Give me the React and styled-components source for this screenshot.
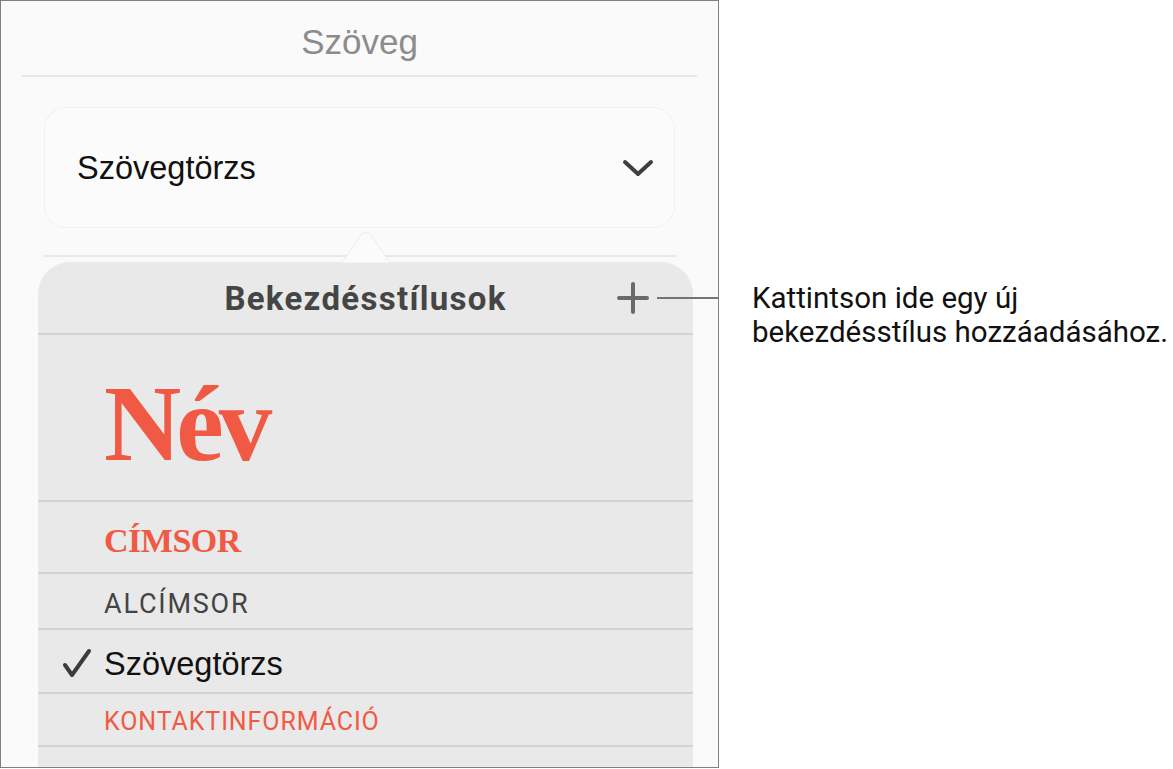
import React from 'react';
import styled, { createGlobalStyle } from 'styled-components';

const GlobalStyle = createGlobalStyle`
  html, body {
    margin: 0;
    padding: 0;
    background: #ffffff;
  }
  * {
    box-sizing: border-box;
  }
`;

const Page = styled.div`
  display: flex;
  align-items: flex-start;
  width: 1173px;
  height: 769px;
  overflow: hidden;
`;

const Panel = styled.div`
  display: flex;
  flex-direction: column;
  width: 719px;
  height: 768px;
  border: 1px solid #7f7f7f;
  background: #fafafa;
  overflow: hidden;
  flex-shrink: 0;

  & > * {
    flex-shrink: 0;
  }
`;

const Title = styled.div`
  height: 76px;
  margin: 0 21px;
  display: flex;
  align-items: center;
  justify-content: center;
  padding-top: 8px;
  border-bottom: 2px solid #e6e6e6;
  font-family: 'Liberation Sans', Arial, sans-serif;
  font-size: 35px;
  color: #8c8c8c;
`;

const Card = styled.div`
  display: flex;
  align-items: center;
  justify-content: space-between;
  margin: 30px 0 0 43px;
  width: 631px;
  height: 121px;
  padding: 0 20px 0 32px;
  border: 1px solid #f1f1f1;
  border-radius: 22px;
  background: #fbfbfb;
`;

const CardText = styled.span`
  font-family: 'Liberation Sans', Arial, sans-serif;
  font-size: 32.5px;
  color: #111;
  padding-top: 2px;
`;

const Rule = styled.div`
  margin: 27px 0 0 42px;
  width: 634px;
  height: 2px;
  background: #e8e8e8;
`;

const Popover = styled.div`
  position: relative;
  margin: 5px 0 0 37px;
  width: 655px;
  background: #e9e9e9;
  border-radius: 32px 32px 0 0;
`;

const Arrow = styled.svg`
  position: absolute;
  top: -30px;
  left: 304px;
  width: 48px;
  height: 31px;
`;

const Header = styled.div`
  position: relative;
  display: flex;
  align-items: center;
  justify-content: center;
  height: 73px;
  border-bottom: 2px solid #d3d3d3;
`;

const HeaderTitle = styled.span`
  font-family: Roboto, 'Liberation Sans', sans-serif;
  font-weight: 700;
  font-size: 33px;
  letter-spacing: 1.3px;
  color: #454545;
  padding-top: 2px;
`;

const PlusButton = styled.div`
  position: absolute;
  left: 579px;
  top: 20px;
  width: 32px;
  height: 32px;
  display: flex;
`;

const Leader = styled.div`
  position: absolute;
  left: 40px;
  top: 15px;
  width: 84px;
  height: 2px;
  background: #747474;
`;

const Row = styled.div`
  position: relative;
  display: flex;
  align-items: center;
  height: ${(p) => p.$h}px;
  padding-left: 66px;
  padding-top: ${(p) => p.$shift || 0}px;
  border-bottom: 2px solid #d3d3d3;
`;

const NameText = styled.span`
  font-family: 'Liberation Serif', 'Times New Roman', serif;
  font-weight: 700;
  font-size: 107px;
  letter-spacing: -5px;
  color: #f05a45;
  line-height: 1;
`;

const HeadingText = styled.span`
  font-family: 'Liberation Serif', 'Times New Roman', serif;
  font-weight: 700;
  font-size: 34px;
  letter-spacing: -0.5px;
  color: #f05a45;
`;

const CapsText = styled.span`
  font-family: Roboto, 'Liberation Sans', sans-serif;
  font-size: ${(p) => p.$size}px;
  letter-spacing: ${(p) => p.$spacing}px;
  color: ${(p) => p.$color};
`;

const BodyText = styled.span`
  font-family: 'Liberation Sans', Arial, sans-serif;
  font-size: 32.5px;
  color: #111;
`;

const Check = styled.svg`
  position: absolute;
  left: 24px;
  top: 18px;
  width: 30px;
  height: 30px;
`;

const Note = styled.div`
  margin: 281px 0 0 33px;
  font-family: Roboto, 'Liberation Sans', sans-serif;
  font-size: 29.5px;
  line-height: 34px;
  color: #111;
  white-space: nowrap;
`;

const Chevron = () => (
  <svg width="32" height="20" viewBox="0 0 32 20">
    <path d="M3 4 L16 16 L29 4" fill="none" stroke="#3f3f3f" strokeWidth="4" strokeLinecap="round" strokeLinejoin="round" />
  </svg>
);

export default function App() {
  return (
    <>
      <GlobalStyle />
      <Page>
        <Panel>
          <Title>Szöveg</Title>
          <Card>
            <CardText>Szövegtörzs</CardText>
            <Chevron />
          </Card>
          <Rule />
          <Popover>
            <Arrow viewBox="0 0 48 31">
              <path
                d="M0 31 L19 3 Q24 -2 29 3 L48 31 Z"
                fill="#fbfbfb"
                stroke="#ececec"
                strokeWidth="1"
              />
            </Arrow>
            <Header>
              <HeaderTitle>Bekezdésstílusok</HeaderTitle>
              <PlusButton>
                <svg width="32" height="32" viewBox="0 0 32 32">
                  <path d="M16 2 V30 M2 16 H30" stroke="#6a6a6a" strokeWidth="4" strokeLinecap="round" />
                </svg>
                <Leader />
              </PlusButton>
            </Header>
            <Row $h={167} $shift={14}>
              <NameText>Név</NameText>
            </Row>
            <Row $h={72} $shift={8}>
              <HeadingText>CÍMSOR</HeadingText>
            </Row>
            <Row $h={56} $shift={6}>
              <CapsText $size={27} $spacing={1.8} $color="#444">ALCÍMSOR</CapsText>
            </Row>
            <Row $h={64} $shift={6}>
              <Check viewBox="0 0 30 30">
                <path d="M3 17 L10 27 L27 3" fill="none" stroke="#3c3c3c" strokeWidth="4" strokeLinecap="round" strokeLinejoin="round" />
              </Check>
              <BodyText>Szövegtörzs</BodyText>
            </Row>
            <Row $h={53} $shift={4}>
              <CapsText $size={25} $spacing={0.9} $color="#f05a45">KONTAKTINFORMÁCIÓ</CapsText>
            </Row>
            <Row $h={60} />
          </Popover>
        </Panel>
        <Note>
          Kattintson ide egy új
          <br />
          bekezdésstílus hozzáadásához.
        </Note>
      </Page>
    </>
  );
}
